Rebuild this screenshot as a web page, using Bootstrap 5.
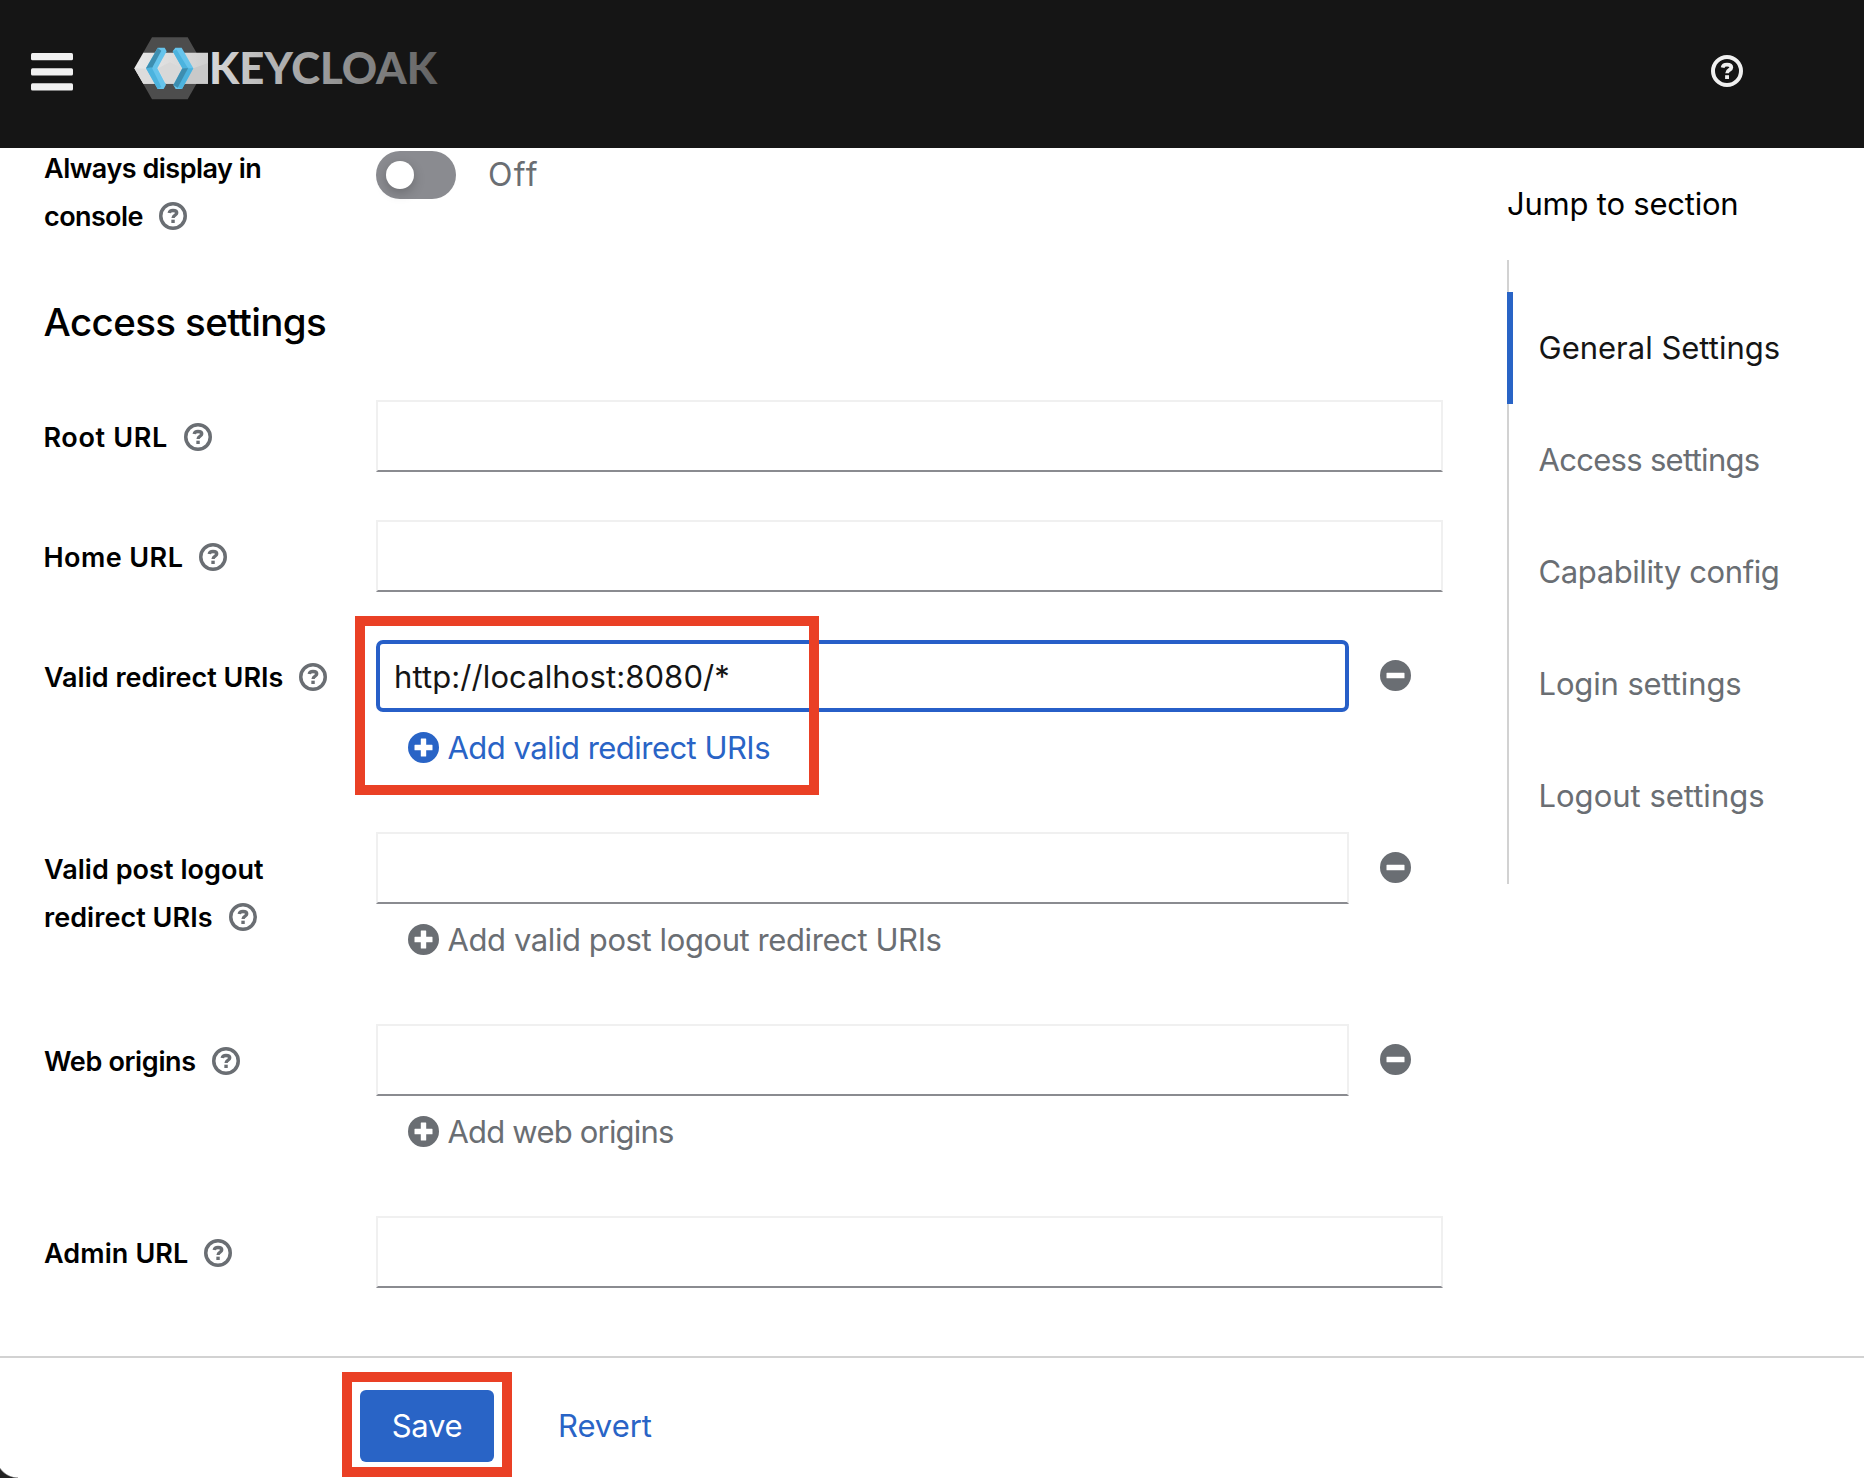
<!DOCTYPE html>
<html lang="en">
<head>
<meta charset="utf-8">
<title>Keycloak – Client settings</title>
<link href="https://cdn.jsdelivr.net/npm/bootstrap@5.3.0/dist/css/bootstrap.min.css" rel="stylesheet">
<style>
  body { font-family: Inter, "Liberation Sans", sans-serif; font-size: 31px; line-height: 48px; color: #000; background: #fff; height: 1478px; overflow: hidden; }
  svg { display: block; flex: none; }
  .masthead { height: 148px; background: #151515; padding: 0 121px 0 31px; }
  .menu-icon { margin-bottom: 4px; fill: #f0f0f0; }
  .brand-logo { margin: 0 0 11px 61px; overflow: visible; }
  .help-icon { margin-bottom: 6px; color: #f0f0f0; }
  .content-area { height: 1208px; overflow: hidden; }
  .settings-form { box-sizing: content-box; width: 1399px; padding-left: 44px; margin: -4px 64px 0 0; }
  .toggle-row { height: 96px; }
  .toggle-group { height: 48px; margin-top: 7px; }
  .field-row { margin-bottom: 48px; min-height: 72px; }
  .field-row.is-list { min-height: 144px; }
  .field-label { width: 332px; padding-top: 13.500px; font-size: 27px; font-weight: 600; white-space: nowrap; }
  .field-label.on-toggle { padding-top: 1px; }
  .field-label .help { display: inline-block; width: 28px; height: 28px; margin-left: 16px; vertical-align: -4px; color: #6a6e73; }
  .section-title { font-size: 38.5px; font-weight: 500; line-height: 52px; letter-spacing: -.6px; margin: 56px 0 52px -.5px; }
  .form-control.pf { height: 72px; font: inherit; letter-spacing: .1px; color: #151515; border: 2px solid #f0f0f0; border-bottom-color: #8a8b90; border-radius: 0; padding: 0 15px; box-shadow: none; }
  .form-control.pf.active-field { border: 4px solid #275fc8; border-radius: 7px; padding: 0 13px 0 14px; }
  .list-input { width: 973px; }
  .remove-btn { margin: 0 0 2px 30.500px; color: #6a6e73; }
  .add-btn { margin-left: 32px; height: 72px; gap: 8.500px; color: #6a6e73; white-space: nowrap; }
  .add-btn svg { margin-bottom: 2px; }
  .add-btn.enabled { color: #2964c6; }
  .toggle { width: 80px; height: 48px; border-radius: 24px; background: #8a8b90; padding: 10px; }
  .toggle-knob { width: 28px; height: 28px; border-radius: 50%; background: #fff; box-shadow: 0 4px 12px rgba(3,3,3,.22); }
  .toggle-text { margin-left: 32px; color: #6a6e73; font-size: 32px; letter-spacing: 1.3px; }
  .highlight { position: absolute; border: 10px solid #ea4025; pointer-events: none; z-index: 2; }
  .hl-uri { left: -21px; top: -24px; width: 464px; height: 179px; }
  .hl-save { left: -18px; top: -18px; width: 170px; height: 105px; }
  .jump { padding-top: 32px; white-space: nowrap; }
  .jump-title { letter-spacing: -.22px; }
  .jump-list { margin-top: 32px; padding: 32px 0; border-left: 2px solid #d2d2d2; }
  .jump-link { height: 112px; padding-left: 29.500px; margin-left: -2px; border-left: 2px solid transparent; color: #6a6e73; }
  .jump-link.current { padding-left: 25.500px; border-left: 6px solid #2964c6; color: #151515; }
  .action-bar { height: 122px; border-top: 2px solid #d2d2d2; padding: 32px 0 0 360px; background: #fff; }
  .save-btn { width: 134px; height: 72px; border-radius: 6px; background: #2964c6; color: #fff; border: 0; padding: 0; font: inherit; letter-spacing: -.3px; }
  .revert-btn { margin-left: 64px; height: 72px; line-height: 72px; color: #2964c6; letter-spacing: -.05px; }
  .window-corner { position: absolute; left: 0; bottom: 0; width: 18px; height: 22px; background: radial-gradient(circle at 18px 0, transparent 21px, #222 22.4px); }
  .t-always { letter-spacing: -.5px; } .t-console { letter-spacing: -.6px; } .t-root { letter-spacing: .65px; margin-left: -.6px; }
  .t-home { letter-spacing: .45px; margin-left: -.6px; } .t-redirect { letter-spacing: 0; } .t-post { letter-spacing: .05px; }
  .t-web { letter-spacing: -.35px; } .t-admin { letter-spacing: .1px; }
  .t-add1 { letter-spacing: -.53px; } .t-add2 { letter-spacing: -.41px; } .t-add3 { letter-spacing: -.8px; }
  .t-j2 { letter-spacing: -.7px; } .t-j3 { letter-spacing: -.4px; } .t-j4 { letter-spacing: -.13px; }
</style>
<script src="https://cdn.jsdelivr.net/npm/bootstrap@5.3.0/dist/js/bootstrap.bundle.min.js"></script>
</head>
<body class="d-flex flex-column position-relative">

<svg width="0" height="0" class="position-absolute">
  <symbol id="i-help" viewBox="0 0 32 32">
    <circle cx="16" cy="16" r="14" fill="none" stroke="currentColor" stroke-width="4"/>
    <path d="M11.6 12.6C12 10.6 13.6 9.7 16 9.7c2.700 0 4.300 1.100 4.300 2.900 0 2.500-4.200 2.300-4.200 5.600" fill="none" stroke="currentColor" stroke-width="3.800"/>
    <path d="M14.100 20.200h3.900v3.800h-3.900z" fill="currentColor"/>
  </symbol>
  <symbol id="i-plus" viewBox="0 0 31 31">
    <path fill="currentColor" fill-rule="evenodd" d="M15.500 0a15.500 15.500 0 1 0 0 31a15.500 15.500 0 1 0 0-31zM13.300 6.500h4.400a.5.5 0 0 1 .5.5v5.800h5.800a.5.5 0 0 1 .5.5v4.400a.5.5 0 0 1-.5.5h-5.800v5.800a.5.5 0 0 1-.5.5h-4.400a.5.5 0 0 1-.5-.5v-5.800H7a.5.5 0 0 1-.5-.5v-4.400a.5.5 0 0 1 .5-.5h5.800V7a.5.5 0 0 1 .5-.5z"/>
  </symbol>
  <symbol id="i-minus" viewBox="0 0 31 31">
    <path fill="currentColor" fill-rule="evenodd" d="M15.500 0a15.500 15.500 0 1 0 0 31a15.500 15.500 0 1 0 0-31zM7 12.700h17a.5.5 0 0 1 .5.5v4.600a.5.5 0 0 1-.5.5H7a.5.5 0 0 1-.5-.5v-4.600a.5.5 0 0 1 .5-.5z"/>
  </symbol>
</svg>

<header class="masthead d-flex align-items-center flex-shrink-0">
  <svg class="menu-icon" width="42" height="38" viewBox="0 0 42 38"><rect width="42" height="7.300" rx="1.500"/><rect y="15.200" width="42" height="7.300" rx="1.500"/><rect y="30.300" width="42" height="7.300" rx="1.500"/></svg>
  <svg class="brand-logo" width="310" height="63" viewBox="402 112 930 189">
    <defs>
      <linearGradient id="word" gradientUnits="userSpaceOnUse" x1="637" y1="0" x2="1310" y2="0"><stop offset="0" stop-color="#d6d6d6"/><stop offset=".35" stop-color="#ababab"/><stop offset=".7" stop-color="#848484"/><stop offset="1" stop-color="#626262"/></linearGradient>
      <linearGradient id="band" x1="0" x2="1"><stop offset="0" stop-color="#e9e9e9"/><stop offset="1" stop-color="#d0d0d0"/></linearGradient>
    </defs>
    <path fill="#4d4d4d" d="M456 113H563L616 206L563 299H456L403 206z"/>
    <path fill="url(#band)" d="M430 159H624V252H430L403 206z"/>
    <path fill="#dcdcdc" d="M403 206L440 207L466 252H430z"/>
    <path fill="#c9c9c9" d="M580 206L624 190V252H553z"/>
    <path fill="#d8d8d8" d="M474 206L510 188L546 206L522 252H498z"/>
    <path fill="#66c4ec" d="M473 144H494L500 155L472 206L498 255L491 268H473L438 206z"/>
    <path fill="#3d8eb0" d="M473 145L484 153L455 207L438 206z"/>
    <path fill="#4cb3de" d="M438 206L455 203L484 262L473 268z"/>
    <path fill="#66c4ec" d="M526 144H545L580 206L546 268H527L520 256L547 206L518 155z"/>
    <path fill="#4cb3de" d="M580 206L563 206L532 262L546 268z"/>
    <path fill="#3d8eb0" d="M547 206L565 204L533 264L520 256z"/>
    <path fill="#4cb3de" d="M518 155L530 150L564 206H547z"/>
    <text x="627" y="252" font-family="Lato" font-weight="900" font-size="129" textLength="684" lengthAdjust="spacingAndGlyphs" fill="url(#word)">KEYCLOAK</text>
  </svg>
  <svg class="help-icon ms-auto" width="32" height="32"><use href="#i-help"/></svg>
</header>

<main class="content-area d-flex flex-shrink-0">
  <form class="settings-form flex-shrink-0">
    <div class="toggle-row d-flex">
      <div class="field-label on-toggle"><span class="t-always">Always display in</span><br><span class="t-console">console</span><svg class="help"><use href="#i-help"/></svg></div>
      <div class="toggle-group d-flex align-items-center">
        <div class="toggle"><div class="toggle-knob"></div></div><span class="toggle-text">Off</span>
      </div>
    </div>
    <h2 class="section-title">Access settings</h2>

    <div class="field-row d-flex">
      <label class="field-label"><span class="t-root">Root URL</span><svg class="help"><use href="#i-help"/></svg></label>
      <div class="flex-grow-1"><input class="form-control pf"></div>
    </div>
    <div class="field-row d-flex">
      <label class="field-label"><span class="t-home">Home URL</span><svg class="help"><use href="#i-help"/></svg></label>
      <div class="flex-grow-1"><input class="form-control pf"></div>
    </div>
    <div class="field-row is-list d-flex">
      <label class="field-label"><span class="t-redirect">Valid redirect URIs</span><svg class="help"><use href="#i-help"/></svg></label>
      <div class="position-relative">
        <div class="d-flex align-items-center"><input class="form-control pf active-field list-input" value="http://localhost:8080/*"><svg class="remove-btn" width="31" height="31"><use href="#i-minus"/></svg></div>
        <div class="add-btn enabled d-flex align-items-center"><svg width="31" height="31"><use href="#i-plus"/></svg><span class="t-add1">Add valid redirect URIs</span></div>
        <div class="highlight hl-uri"></div>
      </div>
    </div>
    <div class="field-row is-list d-flex">
      <label class="field-label"><span class="t-post">Valid post logout</span><br><span class="t-post">redirect URIs</span><svg class="help"><use href="#i-help"/></svg></label>
      <div>
        <div class="d-flex align-items-center"><input class="form-control pf list-input"><svg class="remove-btn" width="31" height="31"><use href="#i-minus"/></svg></div>
        <div class="add-btn d-flex align-items-center"><svg width="31" height="31"><use href="#i-plus"/></svg><span class="t-add2">Add valid post logout redirect URIs</span></div>
      </div>
    </div>
    <div class="field-row is-list d-flex">
      <label class="field-label"><span class="t-web">Web origins</span><svg class="help"><use href="#i-help"/></svg></label>
      <div>
        <div class="d-flex align-items-center"><input class="form-control pf list-input"><svg class="remove-btn" width="31" height="31"><use href="#i-minus"/></svg></div>
        <div class="add-btn d-flex align-items-center"><svg width="31" height="31"><use href="#i-plus"/></svg><span class="t-add3">Add web origins</span></div>
      </div>
    </div>
    <div class="field-row d-flex">
      <label class="field-label"><span class="t-admin">Admin URL</span><svg class="help"><use href="#i-help"/></svg></label>
      <div class="flex-grow-1"><input class="form-control pf"></div>
    </div>
  </form>

  <aside class="jump">
    <div class="jump-title">Jump to section</div>
    <nav class="jump-list">
      <div class="jump-link current d-flex align-items-center">General Settings</div>
      <div class="jump-link t-j2 d-flex align-items-center">Access settings</div>
      <div class="jump-link t-j3 d-flex align-items-center">Capability config</div>
      <div class="jump-link t-j4 d-flex align-items-center">Login settings</div>
      <div class="jump-link d-flex align-items-center">Logout settings</div>
    </nav>
  </aside>
</main>

<footer class="action-bar d-flex flex-shrink-0">
  <div class="position-relative"><button class="save-btn">Save</button><div class="highlight hl-save"></div></div>
  <div class="revert-btn">Revert</div>
</footer>
<div class="window-corner"></div>
</body>
</html>
